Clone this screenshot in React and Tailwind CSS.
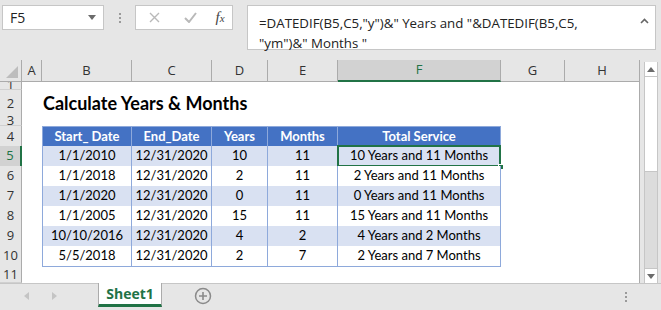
import React from 'react';

// Excel-like sheet: "Calculate Years & Months"
const colTpl = 'grid grid-cols-[22px_20px_90px_80px_56px_70px_163px_64px_75px]';
const letters = ['A', 'B', 'C', 'D', 'E', 'F', 'G', 'H'];

const rowHeights = { 1: 'h-[10px]', 2: 'h-[25px]', 3: 'h-[11px]', 11: 'h-[17px]' };

const head = ['Start_ Date', 'End_Date', 'Years', 'Months', 'Total Service'];
const data = [
  ['1/1/2010', '12/31/2020', '10', '11', '10 Years and 11 Months'],
  ['1/1/2018', '12/31/2020', '2', '11', '2 Years and 11 Months'],
  ['1/1/2020', '12/31/2020', '0', '11', '0 Years and 11 Months'],
  ['1/1/2005', '12/31/2020', '15', '11', '15 Years and 11 Months'],
  ['10/10/2016', '12/31/2020', '4', '2', '4 Years and 2 Months'],
  ['5/5/2018', '12/31/2020', '2', '7', '2 Years and 7 Months'],
];

const uiFont = { fontFamily: '"Open Sans", "Noto Sans", sans-serif' };
const cellFont = { fontFamily: 'Lato, "Liberation Sans", sans-serif' };

const VDots = () => (
  <div className="flex flex-col gap-[2px]">
    <span className="w-[2px] h-[2px] bg-[#9a9a9a]" />
    <span className="w-[2px] h-[2px] bg-[#9a9a9a]" />
    <span className="w-[2px] h-[2px] bg-[#9a9a9a]" />
  </div>
);

const FormulaBar = () => (
  <div className="h-[60px] flex items-start pt-[5px]" style={uiFont}>
    <div className="ml-[2px] w-[102px] h-[25px] bg-white border border-[#c6c6c6] flex items-center justify-between pl-[7px] pr-[7px] text-[14px] text-[#222]">
      <span>F5</span>
      <svg width="8" height="5" viewBox="0 0 8 5"><path d="M0 0h8L4 5z" fill="#6b6b6b" /></svg>
    </div>
    <div className="w-[31px] h-[25px] flex items-center justify-center">
      <VDots />
    </div>
    <div className="w-[98px] h-[25px] bg-white border border-[#c6c6c6] flex items-center">
      <div className="w-[36px] flex justify-center">
        <svg width="11" height="11" viewBox="0 0 11 11"><path d="M1 1l9 9M10 1l-9 9" stroke="#b9b9b9" strokeWidth="1.4" /></svg>
      </div>
      <div className="w-[36px] flex justify-center">
        <svg width="13" height="11" viewBox="0 0 13 11"><path d="M1 6l4 4 7-9" stroke="#b9b9b9" strokeWidth="2" fill="none" /></svg>
      </div>
      <div className="flex-1 flex justify-center text-[#444] italic text-[15px]" style={{ fontFamily: '"Liberation Serif", serif' }}>
        f<span className="text-[11px] mt-[4px]">x</span>
      </div>
    </div>
    <div className="ml-[14px] w-[409px] h-[45px] bg-white border border-[#c6c6c6] flex justify-between pl-[11px] pr-[6px] pt-[7px] text-[13.3px] leading-[20px] text-[#222]">
      <div>
        <div>=DATEDIF(B5,C5,"y")&amp;" Years and "&amp;DATEDIF(B5,C5,</div>
        <div>"ym")&amp;" Months "</div>
      </div>
      <svg className="mt-[5px]" width="9" height="6" viewBox="0 0 9 6"><path d="M1 5l3.5-3.5L8 5" stroke="#666" strokeWidth="1.6" fill="none" /></svg>
    </div>
  </div>
);

const ColumnHeaders = () => (
  <div className={`${colTpl} h-[20px]`} style={uiFont}>
    <div className="bg-[#e6e6e6] border-r border-b border-[#ababab] relative">
      <svg className="absolute right-[3px] bottom-[3px]" width="12" height="12" viewBox="0 0 12 12"><path d="M12 0v12H0z" fill="#bdbdbd" /></svg>
    </div>
    {letters.map((l) =>
      l === 'F' ? (
        <div key={l} className="bg-[#d2d2d2] border-r border-[#ababab] border-b-2 border-b-[#217346] flex items-center justify-center text-[13px] text-[#217346]">
          {l}
        </div>
      ) : (
        <div key={l} className="bg-[#e6e6e6] border-r border-b border-[#ababab] flex items-center justify-center text-[13px] text-[#333]">
          {l}
        </div>
      )
    )}
  </div>
);

const TableCell = ({ r, c, children }) => {
  const isHead = r === 4;
  const selected = r === 5 && c === 4;
  const band = !isHead && r % 2 === 1 ? 'bg-[#d9e1f2]' : isHead ? 'bg-[#4472c4]' : 'bg-white';
  return (
    <div
      className={`relative ${band} border-r border-b border-[#8ea9db] ${c === 0 ? 'border-l' : ''} ${isHead ? 'border-t font-bold text-white' : 'text-black'} flex items-center justify-center text-[13px] whitespace-nowrap`}
      style={cellFont}
    >
      {children}
      {selected && (
        <>
          <div className="absolute left-[-1px] top-[-1px] right-[-1px] bottom-[-1px] border-2 border-[#217346]" />
          <div className="absolute right-[-4px] bottom-[-4px] w-[6px] h-[6px] bg-[#217346] border border-white" />
        </>
      )}
    </div>
  );
};

const Row = ({ n }) => {
  const h = rowHeights[n] || 'h-[20px]';
  const sel = n === 5;
  let cells = null;
  if (n === 4) cells = head;
  if (n >= 5 && n <= 10) cells = data[n - 5];
  return (
    <div className={`${colTpl} ${h}`}>
      <div
        className={`${sel ? 'bg-[#d2d2d2] border-r-2 border-r-[#217346] text-[#217346]' : 'bg-[#e6e6e6] border-r border-[#ababab] text-[#333]'} border-b border-b-[#d0d0d0] flex items-center justify-center text-[13px] overflow-hidden leading-none`}
        style={uiFont}
      >
        {n}
      </div>
      <div />
      {cells ? (
        cells.map((t, i) => (
          <TableCell key={i} r={n} c={i}>
            {t}
          </TableCell>
        ))
      ) : n === 2 ? (
        <div className="col-span-5 flex items-center pl-[1px] text-[18px] font-bold text-black whitespace-nowrap" style={cellFont}>
          Calculate Years &amp; Months
        </div>
      ) : (
        <div className="col-span-5" />
      )}
      <div />
      <div />
    </div>
  );
};

const Scrollbar = () => (
  <div className="w-[14px] mt-[2px] h-[221px] flex flex-col border-x border-[#c6c6c6]">
    <div className="h-[15px] bg-white border-b border-[#c6c6c6] flex items-center justify-center">
      <svg width="8" height="5" viewBox="0 0 8 5"><path d="M0 5h8L4 0z" fill="#6b6b6b" /></svg>
    </div>
    <div className="h-[95px] bg-white border-b border-[#c6c6c6]" />
    <div className="flex-1 bg-[#dcdcdc]" />
    <div className="h-[15px] bg-white border-t border-[#c6c6c6] flex items-center justify-center">
      <svg width="8" height="5" viewBox="0 0 8 5"><path d="M0 0h8L4 5z" fill="#6b6b6b" /></svg>
    </div>
  </div>
);

const TabBar = () => (
  <div className="h-[27px] flex items-start border-t border-[#c6c6c6]" style={uiFont}>
    <div className="w-[98px] h-[24px] flex items-center">
      <svg className="ml-[24px]" width="5" height="8" viewBox="0 0 5 8"><path d="M5 0v8L0 4z" fill="#c4c4c4" /></svg>
      <svg className="ml-[23px]" width="5" height="8" viewBox="0 0 5 8"><path d="M0 0v8l5-4z" fill="#c4c4c4" /></svg>
    </div>
    <div className="w-[64px] h-[24px] -mt-px bg-white border-x border-[#ababab] border-b-[3px] border-b-[#217346] flex items-center justify-center text-[14px] font-bold text-[#217346]">
      Sheet1
    </div>
    <div className="w-[82px] h-[24px] flex items-center justify-center">
      <svg width="18" height="18" viewBox="0 0 18 18">
        <circle cx="9" cy="9" r="7.5" stroke="#8a8a8a" strokeWidth="1.5" fill="none" />
        <path d="M9 5v8M5 9h8" stroke="#8a8a8a" strokeWidth="1.6" />
      </svg>
    </div>
    <div className="flex-1" />
    <div className="w-[36px] h-[24px] flex items-center justify-start pt-[2px]">
      <VDots />
    </div>
  </div>
);

export default function App() {
  const rows = [1, 2, 3, 4, 5, 6, 7, 8, 9, 10, 11];
  return (
    <div className="w-[661px] h-[310px] bg-[#e6e6e6] overflow-hidden">
      <FormulaBar />
      <div className="flex h-[223px]">
        <div className="w-[640px] bg-white border-r border-[#ababab] overflow-hidden">
          <ColumnHeaders />
          {rows.map((n) => (
            <Row key={n} n={n} />
          ))}
        </div>
        <div className="w-[4px]" />
        <Scrollbar />
      </div>
      <TabBar />
    </div>
  );
}
